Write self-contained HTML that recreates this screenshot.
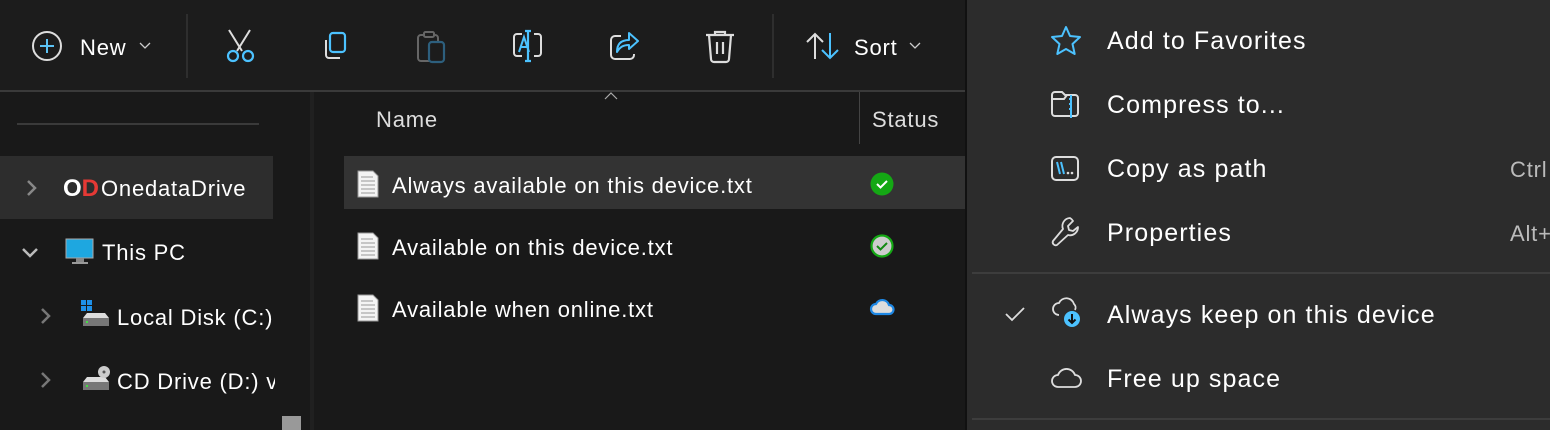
<!DOCTYPE html>
<html><head><style>
*{margin:0;padding:0;box-sizing:border-box}
body{width:1550px;height:430px;overflow:hidden;background:#191919;font-family:"Liberation Sans",sans-serif;color:#fff;position:relative}
.a{position:absolute}
.t{position:absolute;font-size:22px;white-space:nowrap;line-height:1;letter-spacing:0.8px}
.m{font-size:25px;letter-spacing:1.1px}
svg{position:absolute;overflow:visible}
</style></head><body>
<div class="a" style="left:0;top:0;width:966px;height:91px;background:#1c1c1c"></div>
<div class="a" style="left:0;top:90px;width:966px;height:2px;background:#3a3a3a"></div>
<div class="a" style="left:186px;top:14px;width:2px;height:64px;background:#2e2e2e"></div>
<div class="a" style="left:772px;top:14px;width:2px;height:64px;background:#2e2e2e"></div>
<!-- toolbar -->
<svg style="left:32px;top:31px" width="32" height="32"><circle cx="15" cy="15" r="14" fill="none" stroke="#ddd" stroke-width="2"/><path d="M15 8v14M8 15h14" stroke="#5cc3f5" stroke-width="2"/></svg>
<div class="t" style="left:80px;top:37px">New</div>
<svg style="left:139px;top:42px" width="14" height="8"><path d="M1 1l5 5 5-5" stroke="#ccc" fill="none" stroke-width="1.3"/></svg>
<svg style="left:224px;top:30px" width="34" height="34"><path d="M5 0l13 21M26 0L13 21" stroke="#ddd" stroke-width="2" fill="none"/><circle cx="9" cy="26" r="5" stroke="#4cc2ff" stroke-width="2.2" fill="none"/><circle cx="24" cy="26" r="5" stroke="#4cc2ff" stroke-width="2.2" fill="none"/></svg>
<svg style="left:321px;top:32px" width="30" height="30"><rect x="9" y="1" width="15" height="19" rx="3" stroke="#4cc2ff" stroke-width="2.2" fill="none"/><path d="M5 8v15a3 3 0 003 3h11" stroke="#ddd" stroke-width="2" fill="none"/></svg>
<svg style="left:417px;top:31px" width="32" height="32"><rect x="1" y="4" width="20" height="26" rx="3" stroke="#666" stroke-width="2" fill="none"/><rect x="7" y="1" width="10" height="5" rx="1.5" stroke="#666" stroke-width="2" fill="#1c1c1c"/><rect x="12" y="11" width="15" height="20" rx="3" stroke="#2d5f7d" stroke-width="2.2" fill="#1c1c1c"/></svg>
<svg style="left:512px;top:30px" width="34" height="34"><path d="M10 4H5a3 3 0 00-3 3v16a3 3 0 003 3h5M22 4h4a3 3 0 013 3v16a3 3 0 01-3 3h-4" stroke="#ddd" stroke-width="2" fill="none"/><path d="M7 22l5-15 5 15M9 17h6" stroke="#4cc2ff" stroke-width="2" fill="none"/><path d="M16 1v30M13 1h6M13 31h6" stroke="#4cc2ff" stroke-width="2.2"/></svg>
<svg style="left:609px;top:31px" width="34" height="32"><path d="M12 5H6a4 4 0 00-4 4v15a4 4 0 004 4h15a4 4 0 004-4v-1" stroke="#ddd" stroke-width="2" fill="none"/><path d="M20 2l9 8-9 8v-4c-6 0-9 2-12 7 0-8 4-12 12-12z" stroke="#4cc2ff" stroke-width="2" fill="none" stroke-linejoin="round"/></svg>
<svg style="left:705px;top:30px" width="32" height="34"><path d="M1 5h28M10 5V2h10v3M4 5l2 24a3 3 0 003 3h12a3 3 0 003-3l2-24M12 12v12M18 12v12" stroke="#ddd" stroke-width="2.2" fill="none"/></svg>
<svg style="left:806px;top:32px" width="34" height="28"><path d="M9 27V2M1 10l8-8 8 8" stroke="#ddd" stroke-width="2" fill="none"/><path d="M24 1v25M16 18l8 8 8-8" stroke="#4cc2ff" stroke-width="2" fill="none"/></svg>
<div class="t" style="left:854px;top:37px">Sort</div>
<svg style="left:909px;top:42px" width="14" height="8"><path d="M1 1l5 5 5-5" stroke="#ccc" fill="none" stroke-width="1.3"/></svg>
<!-- nav -->
<div class="a" style="left:17px;top:123px;width:242px;height:2px;background:#3a3a3a"></div>
<div class="a" style="left:0;top:156px;width:273px;height:63px;background:#2d2d2d"></div>
<div class="a" style="left:310px;top:92px;width:4px;height:338px;background:#202020"></div>
<svg style="left:26px;top:180px" width="12" height="16"><path d="M2 1l7 7-7 7" stroke="#888" stroke-width="2.5" fill="none"/></svg>
<div class="t" style="left:63px;top:177px;font-weight:bold;font-size:24px;color:#fff;letter-spacing:0">O<span style="color:#e53935">D</span></div>
<div class="t" style="left:101px;top:178px">OnedataDrive</div>
<svg style="left:22px;top:247px" width="18" height="12"><path d="M1 2l7 7 7-7" stroke="#bbb" stroke-width="2.5" fill="none"/></svg>
<svg style="left:65px;top:238px" width="30" height="28"><rect x="1" y="1" width="27" height="19" fill="#1ea7e0" stroke="#aaa" stroke-width="1"/><rect x="11" y="20" width="8" height="4" fill="#888"/><rect x="7" y="24" width="16" height="2" fill="#999"/></svg>
<div class="t" style="left:102px;top:242px">This PC</div>
<svg style="left:40px;top:308px" width="12" height="16"><path d="M2 1l7 7-7 7" stroke="#777" stroke-width="2.5" fill="none"/></svg>
<svg style="left:80px;top:300px" width="32" height="30"><rect x="1" y="0" width="5" height="5" fill="#1e90e8"/><rect x="7" y="0" width="5" height="5" fill="#1e90e8"/><rect x="1" y="6" width="5" height="5" fill="#1e90e8"/><rect x="7" y="6" width="5" height="5" fill="#1e90e8"/><path d="M3 18l4-5h18l4 5z" fill="#ddd"/><rect x="3" y="18" width="26" height="8" fill="#777"/><circle cx="7" cy="22" r="1" fill="#3f3"/></svg>
<div class="t" style="left:117px;top:307px">Local Disk (C:)</div>
<svg style="left:40px;top:372px" width="12" height="16"><path d="M2 1l7 7-7 7" stroke="#777" stroke-width="2.5" fill="none"/></svg>
<svg style="left:80px;top:364px" width="32" height="30"><path d="M3 18l4-5h18l4 5z" fill="#ddd"/><rect x="3" y="18" width="26" height="8" fill="#777"/><circle cx="7" cy="22" r="1" fill="#3f3"/><circle cx="24" cy="8" r="6" fill="#ccc"/><circle cx="24" cy="8" r="1.5" fill="#555"/></svg>
<div style="position:absolute;left:117px;top:360px;width:158px;height:40px;overflow:hidden"><div class="t" style="left:0;top:11px">CD Drive (D:) v</div></div>
<div class="a" style="left:282px;top:416px;width:19px;height:14px;background:#999"></div>
<!-- list -->
<svg style="left:604px;top:92px" width="16" height="8"><path d="M1 7l6-6 6 6" stroke="#aaa" fill="none" stroke-width="1.2"/></svg>
<div class="t" style="left:376px;top:109px;color:#ddd">Name</div>
<div class="a" style="left:859px;top:92px;width:1px;height:52px;background:#444"></div>
<div class="t" style="left:872px;top:109px;color:#ddd">Status</div>
<div class="a" style="left:344px;top:156px;width:622px;height:53px;background:#333"></div>
<svg style="left:357px;top:170px" width="22" height="28"><path d="M1 1h15l5 5v21H1z" fill="#f4f4f4" stroke="#999"/><path d="M4 7h12M4 11h14M4 15h14M4 19h14M4 23h14" stroke="#999"/></svg>
<div class="t" style="left:392px;top:175px">Always available on this device.txt</div>
<svg style="left:870px;top:172px" width="24" height="24"><circle cx="12" cy="12" r="11.5" fill="#14a814"/><path d="M7 12l3.5 3.5L17 9" stroke="#fff" stroke-width="2" fill="none"/></svg>
<svg style="left:357px;top:232px" width="22" height="28"><path d="M1 1h15l5 5v21H1z" fill="#f4f4f4" stroke="#999"/><path d="M4 7h12M4 11h14M4 15h14M4 19h14M4 23h14" stroke="#999"/></svg>
<div class="t" style="left:392px;top:237px">Available on this device.txt</div>
<svg style="left:870px;top:234px" width="24" height="24"><circle cx="12" cy="12" r="10.5" fill="#ccc" stroke="#14a814" stroke-width="2.2"/><path d="M7 12l3.5 3.5L17 9" stroke="#128a12" stroke-width="2" fill="none"/></svg>
<svg style="left:357px;top:294px" width="22" height="28"><path d="M1 1h15l5 5v21H1z" fill="#f4f4f4" stroke="#999"/><path d="M4 7h12M4 11h14M4 15h14M4 19h14M4 23h14" stroke="#999"/></svg>
<div class="t" style="left:392px;top:299px">Available when online.txt</div>
<svg style="left:870px;top:298px" width="24" height="18"><path d="M6 16a5 5 0 010-10 7 7 0 0113 1 4.5 4.5 0 010 9z" fill="#ddd" stroke="#1e88e5" stroke-width="2.2"/></svg>
<!-- menu -->
<div class="a" style="left:965px;top:0;width:2px;height:430px;background:#111"></div>
<div class="a" style="left:967px;top:0;width:583px;height:430px;background:#2c2c2c"></div>
<div class="a" style="left:972px;top:272px;width:578px;height:2px;background:#3d3d3d"></div>
<div class="a" style="left:972px;top:418px;width:578px;height:2px;background:#3d3d3d"></div>
<svg style="left:1051px;top:26px" width="32" height="30"><path d="M15 1l4 9 10 1-7.5 7 2.2 10L15 23l-8.7 5 2.2-10L1 11l10-1z" stroke="#4cc2ff" stroke-width="2" fill="none" stroke-linejoin="round"/></svg>
<div class="t m" style="left:1107px;top:29px">Add to Favorites</div>
<svg style="left:1051px;top:91px" width="30" height="28"><path d="M1 4a3 3 0 013-3h7l3 3h10a3 3 0 013 3v15a3 3 0 01-3 3H4a3 3 0 01-3-3z" stroke="#ddd" stroke-width="2" fill="none"/><path d="M1 8h12l3-4" stroke="#ddd" stroke-width="2" fill="none"/><path d="M20 4v23M18 8h3M18 13h3M18 18h3" stroke="#4cc2ff" stroke-width="2"/></svg>
<div class="t m" style="left:1107px;top:93px">Compress to...</div>
<svg style="left:1051px;top:156px" width="30" height="26"><rect x="1" y="1" width="26" height="23" rx="4" stroke="#ddd" stroke-width="2" fill="none"/><path d="M6 6l3 12M10 6l3 12" stroke="#4cc2ff" stroke-width="2"/><circle cx="17" cy="17" r="1.3" fill="#ddd"/><circle cx="21" cy="17" r="1.3" fill="#ddd"/></svg>
<div class="t m" style="left:1107px;top:157px">Copy as path</div>
<div class="t" style="left:1510px;top:159px;color:#bbb">Ctrl</div>
<svg style="left:1051px;top:217px" width="30" height="32"><path d="M19 1a8 8 0 00-7 11L2 24a3 3 0 004 4l11-10a8 8 0 0010-8l-5 4-4-1-1-4 5-5a8 8 0 00-3-3z" stroke="#ddd" stroke-width="1.8" fill="none" stroke-linejoin="round"/></svg>
<div class="t m" style="left:1107px;top:221px">Properties</div>
<div class="t" style="left:1510px;top:223px;color:#bbb">Alt+</div>
<svg style="left:1005px;top:306px" width="20" height="16"><path d="M1 8l6 6L19 2" stroke="#ddd" stroke-width="1.8" fill="none"/></svg>
<svg style="left:1050px;top:297px" width="34" height="34"><path d="M9 18a6 6 0 010-12 8 8 0 0115 1 5 5 0 011 6" stroke="#ddd" stroke-width="1.8" fill="none"/><circle cx="22" cy="22" r="8" fill="#4cc2ff"/><path d="M22 17v9M18.5 22.5l3.5 3.5 3.5-3.5" stroke="#111" stroke-width="2" fill="none"/></svg>
<div class="t m" style="left:1107px;top:303px">Always keep on this device</div>
<svg style="left:1050px;top:365px" width="34" height="24"><path d="M8 22a6 6 0 010-12 9 9 0 0117 0 6 6 0 010 12z" stroke="#ddd" stroke-width="1.8" fill="none"/></svg>
<div class="t m" style="left:1107px;top:367px">Free up space</div>
</body></html>
